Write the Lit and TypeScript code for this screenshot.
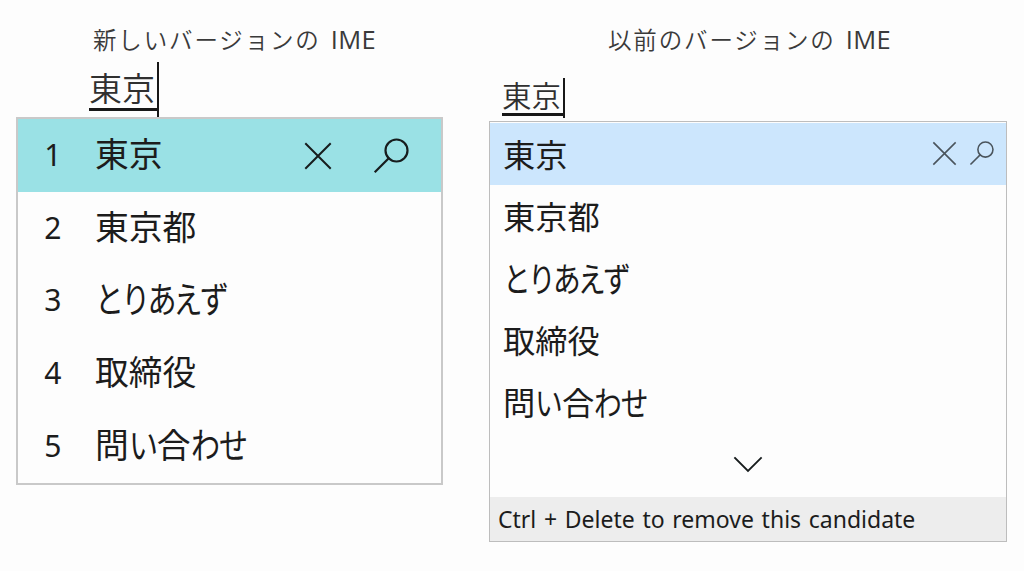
import { LitElement, html, css, svg } from "lit";
import { customElement } from "lit/decorators.js";
import { styleMap } from "lit/directives/style-map.js";

// Kana are set narrower than kanji, so each run is condensed on its own;
// long runs are packed a little tighter than short ones.
const KANA_SCALE = 0.86;
const pitch = (run: string) => (run.length > 3 ? 0.775 : 0.83);

const kana = (run: string) => {
  const p = pitch(run);
  return html`<span class="kana" style=${styleMap({
    width: `${run.length * p}em`,
    letterSpacing: `${(p / KANA_SCALE - 1).toFixed(4)}em`,
  })}>${run}</span>`;
};

const mixed = (text: string) =>
  (text.match(/[ぁ-ん]+|[^ぁ-ん]+/g) ?? []).map((run) =>
    /[ぁ-ん]/.test(run) ? kana(run) : html`<span>${run}</span>`
  );

const cross = svg`<path d="M1 1L25 25M25 1L1 25"/>`;
const lens = svg`<circle cx="22.5" cy="12.5" r="11"/><path d="M14.7 20.3L1.5 33.5"/>`;

@customElement("app-root")
export class AppRoot extends LitElement {
  static styles = css`
    :host {
      display: block;
      width: 1024px;
      height: 571px;
      overflow: hidden;
      background: #fdfdfd;
      color: #1c1c1c;
      font-family: "Noto Sans CJK JP", sans-serif;
    }
    * { box-sizing: border-box; }
    .page { display: flex; gap: 46px; padding: 23px 0 0 16px; height: 571px; align-items: flex-start; }
    .side { display: flex; flex-direction: column; }
    .new { width: 427px; }
    .old { width: 518px; }
    .title {
      height: 33px; line-height: 32px; font-size: 23.5px; letter-spacing: 1.85px;
      font-weight: 350; color: #3a3a3a; white-space: nowrap;
    }
    .new .title { padding-left: 77px; }
    .old .title { padding-left: 119px; }
    .latin { font-family: "Open Sans", "Noto Sans", sans-serif; font-size: 25.5px; letter-spacing: 0.4px; margin-left: 10px; font-weight: 400; }
    .typed { display: flex; align-items: flex-start; white-space: nowrap; font-weight: 350; color: #303030; }
    .word { border-bottom: 3px solid #181818; }
    .caret { background: #181818; width: 2px; }
    .new .typed { height: 61px; padding: 6px 0 0 73px; }
    .new .word { height: 49px; width: 68px; font-size: 33px; line-height: 51px; }
    .new .caret { height: 55px; }
    .old .typed { height: 65px; padding: 22px 0 0 13px; }
    .old .word { height: 38px; width: 61px; font-size: 29.5px; line-height: 33px; }
    .old .caret { height: 40px; }
    .panel { display: flex; flex-direction: column; background: #fdfdfd; }
    .new .panel { height: 368px; border: 2px solid #c9c9c9; }
    .old .panel { height: 421px; border: 1.5px solid #bdbdbd; padding-top: 1px; }
    .row { display: flex; align-items: center; white-space: nowrap; }
    .new .row { height: 72.8px; font-size: 33.8px; padding: 0 32px 0 0; }
    .old .row { height: 62px; font-size: 32.3px; padding: 0 12px 0 13px; }
    .new .picked { background: #9ae1e5; }
    .old .picked { background: #cce6fd; }
    .num { width: 77px; padding: 0 0 3px 26px; font-family: "Noto Sans", sans-serif; font-size: 31px; }
    .num span { display: inline-block; transform: scaleX(0.97); }
    .cand { flex: 1; display: flex; line-height: 48px; }
    .new .cand { padding-bottom: 5px; }
    .old .cand { padding-bottom: 2px; }
    .kana { display: block; transform: scale(0.86, 1.07); transform-origin: 0 50%; }
    .tools { display: flex; align-items: center; }
    svg { display: block; fill: none; stroke: #171c1d; stroke-linecap: square; overflow: visible; }
    .new .tools { gap: 43px; }
    .new .tools svg:first-child { margin-top: 2px; }
    .old .tools { gap: 14px; padding-bottom: 2px; }
    .old .tools svg { stroke: #4a545c; }
    .more { display: flex; justify-content: center; align-items: center; height: 62px; }
    .hint {
      height: 44px; line-height: 45px; margin-top: auto; background: #ededed; padding-left: 8px;
      font-family: "Noto Sans", sans-serif; font-size: 23px; word-spacing: 1.7px; white-space: nowrap;
    }
  `;

  private words = ["東京", "東京都", "とりあえず", "取締役", "問い合わせ"];

  private tools(crossSize: number, lensSize: number, crossStroke: number, lensStroke: number) {
    return html`<div class="tools">
      <svg width=${crossSize} height=${crossSize} viewBox="0 0 26 26" stroke-width=${crossStroke}>${cross}</svg>
      <svg width=${lensSize} height=${lensSize} viewBox="0 0 35 35" stroke-width=${lensStroke}>${lens}</svg>
    </div>`;
  }

  render() {
    return html`<main class="page">
      <section class="side new">
        <div class="title">新しいバージョンの<span class="latin">IME</span></div>
        <div class="typed"><span class="word">東京</span><span class="caret"></span></div>
        <div class="panel">
          ${this.words.map((w, i) => html`<div class="row ${i === 0 ? "picked" : ""}">
            <div class="num"><span>${i + 1}</span></div>
            <div class="cand">${mixed(w)}</div>
            ${i === 0 ? this.tools(26, 35, 2, 2.2) : ""}
          </div>`)}
        </div>
      </section>
      <section class="side old">
        <div class="title">以前のバージョンの<span class="latin">IME</span></div>
        <div class="typed"><span class="word">東京</span><span class="caret"></span></div>
        <div class="panel">
          ${this.words.map((w, i) => html`<div class="row ${i === 0 ? "picked" : ""}">
            <div class="cand">${mixed(w)}</div>
            ${i === 0 ? this.tools(23, 24, 1.8, 2.3) : ""}
          </div>`)}
          <div class="more">
            <svg width="28" height="15" viewBox="0 0 28 15" stroke-width="1.8"><path d="M1 1L14 14L27 1"/></svg>
          </div>
          <div class="hint">Ctrl + Delete to remove this candidate</div>
        </div>
      </section>
    </main>`;
  }
}
